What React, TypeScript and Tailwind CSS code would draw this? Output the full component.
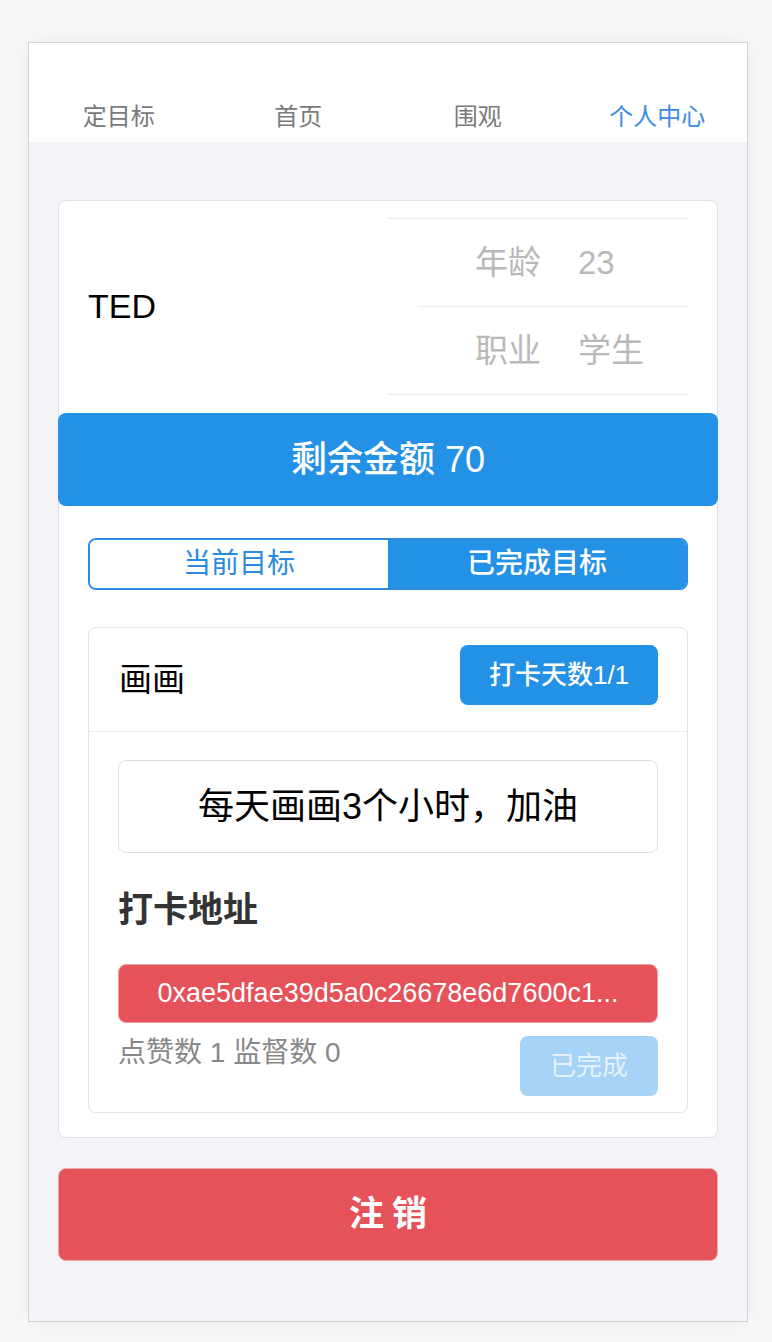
import React from "react";

const font = { fontFamily: '"Liberation Sans", "Noto Sans CJK SC", sans-serif' };

export default function App() {
  return (
    <div className="min-h-[1342px] bg-[#f8f8f9] pt-[42px] pl-[28px]" style={font}>
      <div className="w-[720px] h-[1280px] border border-[#d2d2d6] bg-[#f4f4f8] shadow-[0_0_24px_rgba(0,0,0,0.06)] flex flex-col">
        {/* header tabs */}
        <div className="h-[99px] bg-white grid grid-cols-4 items-end pb-[9px]">
          <div className="text-center text-[24px] leading-[32px] text-[#7a7a7a]">定目标</div>
          <div className="text-center text-[24px] leading-[32px] text-[#7a7a7a]">首页</div>
          <div className="text-center text-[24px] leading-[32px] text-[#7a7a7a]">围观</div>
          <div className="text-center text-[24px] leading-[32px] text-[#3a8ddf]">个人中心</div>
        </div>

        <div className="px-[29px] pt-[58px]">
          {/* main card */}
          <div className="bg-white border border-[#e2e2e6] rounded-[8px] pb-[24px]">
            <div className="flex pt-[17px] pb-[18px] pl-[29px] pr-[29px]">
              <div className="flex-1 flex items-center text-[34px] text-black">TED</div>
              <div className="w-[300px] border-t border-b border-[#ececec]">
                <div className="h-[87px] flex items-center pl-[87px] text-[33px] text-[#b9b9b9]">
                  <span>年龄</span>
                  <span className="ml-[37px]">23</span>
                </div>
                <div className="ml-[30px] border-t border-[#ececec]" />
                <div className="h-[87px] flex items-center pl-[87px] text-[33px] text-[#b9b9b9]">
                  <span>职业</span>
                  <span className="ml-[37px]">学生</span>
                </div>
              </div>
            </div>

            {/* balance bar */}
            <div className="-mx-px h-[93px] bg-[#2391e6] rounded-[8px] flex items-center justify-center text-white text-[36px] font-medium">
              剩余金额 70
            </div>

            <div className="px-[29px]">
              {/* segmented */}
              <div className="mt-[32px] h-[52px] border-2 border-[#2b8be2] rounded-[8px] flex overflow-hidden">
                <div className="flex-1 flex items-center justify-center bg-white text-[#2b8be2] text-[28px]">当前目标</div>
                <div className="flex-1 flex items-center justify-center bg-[#2391e6] text-white text-[28px] font-medium">已完成目标</div>
              </div>

              {/* goal card */}
              <div className="mt-[37px] border border-[#e4e4e8] rounded-[8px]">
                <div className="h-[104px] flex items-start justify-between pl-[30px] pr-[29px] pt-[17px] border-b border-[#ededed]">
                  <span className="text-[33px] leading-[40px] mt-[15px] text-black">画画</span>
                  <div className="w-[198px] h-[60px] rounded-[8px] bg-[#2391e6] text-white text-[26px] font-medium flex items-center justify-center">
                    打卡天数1/1
                  </div>
                </div>
                <div className="px-[29px] pt-[28px] pb-[16px]">
                  <div className="h-[93px] border border-[#dedede] rounded-[8px] flex items-center justify-center text-[36px] text-black">
                    每天画画3个小时，加油
                  </div>
                  <div className="mt-[36px] text-[35px] leading-[42px] font-bold text-[#333]">打卡地址</div>
                  <div className="mt-[33px] h-[59px] rounded-[8px] bg-[#e5525a] border border-[#f0a0a4] flex items-center justify-center text-white text-[27px]">
                    0xae5dfae39d5a0c26678e6d7600c1...
                  </div>
                  <div className="mt-[13px] flex justify-between items-start">
                    <span className="text-[28px] leading-[34px] text-[#888]">点赞数 1 监督数 0</span>
                    <div className="w-[138px] h-[60px] rounded-[8px] bg-[#a7d3f6] text-[#e6f2fd] text-[26px] flex items-center justify-center">
                      已完成
                    </div>
                  </div>
                </div>
              </div>
            </div>
          </div>

          {/* logout */}
          <div className="mt-[30px] h-[93px] rounded-[8px] bg-[#e5525a] border border-[#f0a8ac] flex items-center justify-center text-white text-[35px] font-bold tracking-[8px] pl-[8px]">
            注销
          </div>
        </div>
      </div>
    </div>
  );
}
